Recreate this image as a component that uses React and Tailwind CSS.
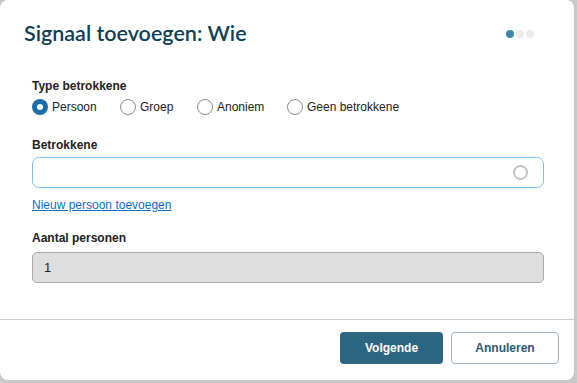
import React from "react";

function Radio({ checked, label }) {
  return (
    <label className="flex items-center gap-[4px]">
      <span
        className={
          checked
            ? "flex h-[16px] w-[16px] items-center justify-center rounded-full bg-[#1a6ea6]"
            : "h-[16px] w-[16px] rounded-full border border-[#8a8a8a] bg-white"
        }
      >
        {checked && <span className="h-[6px] w-[6px] rounded-full bg-white" />}
      </span>
      <span className="text-[12px] text-[#222]">{label}</span>
    </label>
  );
}

export default function App() {
  return (
    <div className="h-[383px] w-[577px] bg-[#c9c9c9] font-[family-name:Liberation_Sans,Arial,sans-serif]">
      <div className="flex h-[380px] w-[574px] flex-col rounded-[8px] bg-white">
        <div className="flex items-center justify-between pl-[24px] pr-[40px] pt-[19px]">
          <h1 className="font-[family-name:Lato,sans-serif] text-[21.5px] font-semibold leading-[28px] text-[#0f3f55]">
            Signaal toevoegen: Wie
          </h1>
          <div className="flex gap-[2px] pt-[2px]">
            <span className="h-[8px] w-[8px] rounded-full bg-[#3f86a6]" />
            <span className="h-[8px] w-[8px] rounded-full bg-[#ebebeb]" />
            <span className="h-[8px] w-[8px] rounded-full bg-[#ebebeb]" />
          </div>
        </div>

        <div className="flex flex-1 flex-col px-[32px] pt-[32px]">
          <div className="text-[12px] font-bold leading-[14px] text-[#222]">Type betrokkene</div>
          <div className="mt-[5px] flex items-center">
            <div className="w-[88px]"><Radio checked label="Persoon" /></div>
            <div className="w-[77px]"><Radio label="Groep" /></div>
            <div className="w-[90px]"><Radio label="Anoniem" /></div>
            <Radio label="Geen betrokkene" />
          </div>

          <div className="mt-[22px] text-[12px] font-bold leading-[14px] text-[#222]">Betrokkene</div>
          <div className="mt-[5px] flex h-[31px] w-[512px] items-center justify-end rounded-[7px] border border-[#7cc2f0] bg-white pr-[15px]">
            <span className="h-[15px] w-[15px] rounded-full border-[2.5px] border-[#c4c4c4]" />
          </div>
          <a className="mt-[10px] w-fit text-[12px] leading-[14px] text-[#0b6ec6] underline">
            Nieuw persoon toevoegen
          </a>

          <div className="mt-[19px] text-[12px] font-bold leading-[14px] text-[#222]">Aantal personen</div>
          <div className="mt-[7px] flex h-[31px] w-[512px] items-center rounded-[5px] border border-[#a9a9a9] bg-[#dedede] pl-[11px] font-[family-name:Arial,sans-serif] text-[13px] text-[#222]">
            1
          </div>
        </div>

        <div className="flex justify-end gap-[8px] border-t border-[#cfcfcf] pb-[16px] pr-[15px] pt-[12px]">
          <button className="h-[32px] w-[103px] rounded-[4px] bg-[#2b6581] text-[12px] font-bold text-white">
            Volgende
          </button>
          <button className="h-[32px] w-[108px] rounded-[4px] border border-[#9eb5c2] bg-white text-[12px] font-bold text-[#2b5a74]">
            Annuleren
          </button>
        </div>
      </div>
    </div>
  );
}
